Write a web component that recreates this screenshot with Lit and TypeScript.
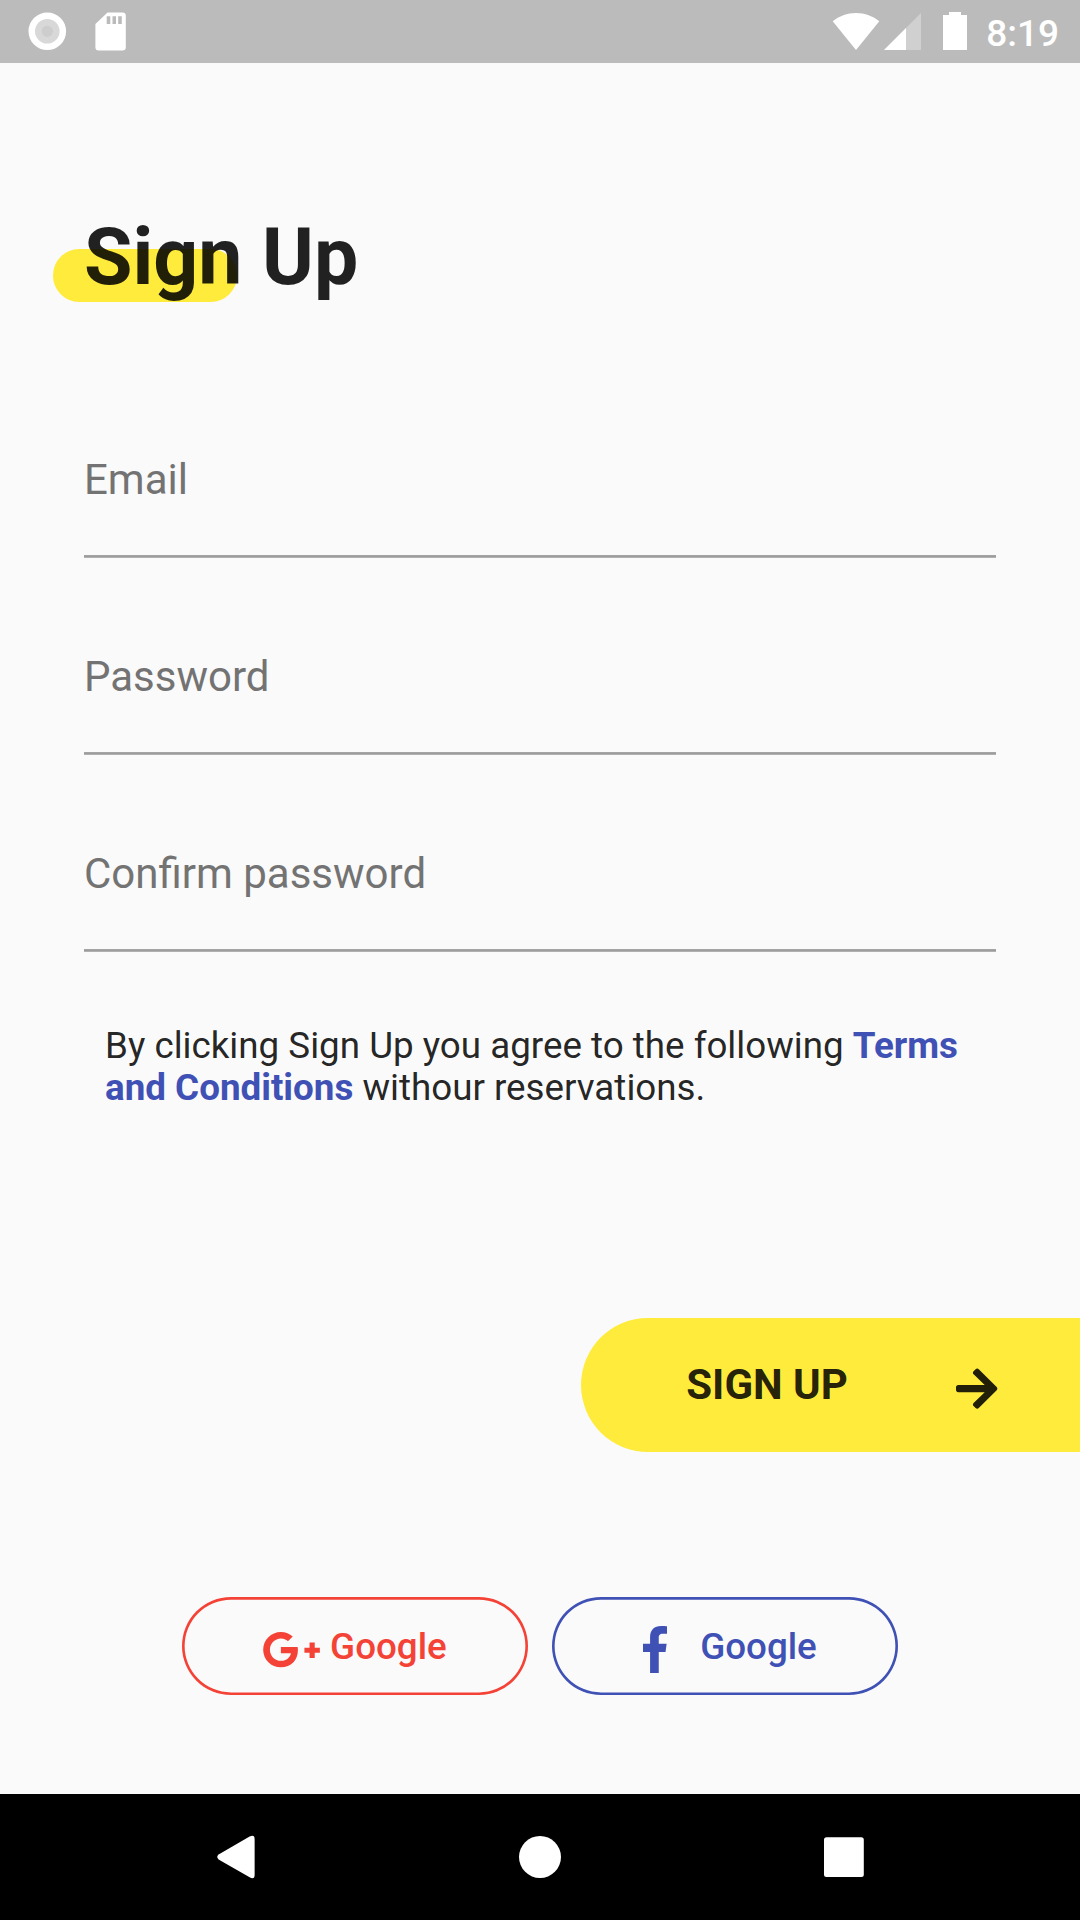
import { LitElement, html, css, svg } from "lit";
import { customElement, property } from "lit/decorators.js";

@customElement("status-bar")
class StatusBar extends LitElement {
  static styles = css`
    :host {
      display: flex;
      justify-content: space-between;
      height: 63px;
      background: #bbbbbb;
      color: #fff;
      font: 500 37px/44px Roboto, sans-serif;
    }
    .left,
    .right {
      display: flex;
      align-items: flex-start;
    }
    svg {
      display: block;
      flex: none;
    }
    .time {
      padding: 12px 21px 0 0;
      white-space: nowrap;
    }
  `;
  render() {
    return html`
      <div class="left">
        <svg width="140" height="63" viewBox="0 0 140 63">
          <circle cx="47.3" cy="31.3" r="18.8" fill="#fff" />
          <circle cx="47.3" cy="31.3" r="12.3" fill="#d8d8d8" />
          <circle cx="47.3" cy="31.3" r="5.6" fill="#cdcdcd" />
          <path
            fill="#fff"
            fill-rule="evenodd"
            d="M107.5 12.5H122.5A3.3 3.3 0 0 1 125.8 15.8V47.2A3.3 3.3 0 0 1 122.5 50.5H98.7A3.3 3.3 0 0 1 95.4 47.2V24ZM106.7 16.3V24H110.3V16.3ZM112.5 16.3V24H116V16.3ZM118.2 16.3V24H121.8V16.3Z"
          />
        </svg>
      </div>
      <div class="right">
        <svg width="156" height="63" viewBox="830 0 156 63">
          <path fill="#fff" d="M856 50 832.7 21.3C839 16.2 847 13 856 13S873 16.2 879.3 21.3Z" />
          <path fill="#d0d0d0" d="M921 13V50H884Z" />
          <path fill="#fff" d="M906 28V50H884Z" />
          <path fill="#fff" d="M949 12H961V15H967V50H943V15H949Z" />
        </svg>
        <span class="time">8:19</span>
      </div>
    `;
  }
}

@customElement("form-field")
class FormField extends LitElement {
  @property() label = "";
  static styles = css`
    :host {
      display: flex;
      flex-direction: column;
      justify-content: space-between;
      height: 103px;
      color: #737373;
      font: 400 42px/49px Roboto, sans-serif;
    }
    .line {
      height: 3px;
      background: linear-gradient(#a4a4a4 1px, #9c9c9c 1px 2px, #b0b0b0 2px);
    }
  `;
  render() {
    return html`<span>${this.label}</span>
      <div class="line"></div>`;
  }
}

@customElement("social-button")
class SocialButton extends LitElement {
  @property() kind = "google";
  static styles = css`
    :host {
      display: block;
      width: 346.5px;
      height: 97.5px;
    }
    .pill {
      box-sizing: border-box;
      display: flex;
      align-items: center;
      height: 100%;
      padding: 2px 0 0 80.5px;
      border-radius: 49px;
      box-shadow: inset 0 0 0 2.625px currentColor;
      font: 500 36.75px/43px Roboto, sans-serif;
    }
    .google {
      color: #f44336;
    }
    .facebook {
      color: #3f51b5;
    }
    .icon {
      box-sizing: border-box;
      display: flex;
      width: 67.9px;
      padding-top: 6px;
    }
    .facebook .icon {
      padding-left: 10.6px;
    }
  `;
  render() {
    const icon =
      this.kind === "google"
        ? svg`<svg width="59.06" height="47.25" viewBox="0 0 640 512"><path fill="currentColor" d="M386.061 228.496c1.834 9.692 3.143 19.384 3.143 31.956C389.204 370.205 315.599 448 204.8 448c-106.084 0-192-85.915-192-192s85.916-192 192-192c51.864 0 95.083 18.859 128.611 50.292l-52.126 50.03c-14.145-13.621-39.028-29.599-76.485-29.599-65.484 0-118.92 54.221-118.92 121.277 0 67.056 53.436 121.277 118.92 121.277 75.961 0 104.513-54.745 108.965-82.773H204.8v-66.009h181.261zm185.406 6.437V179.2h-56.001v55.733h-55.733v56.001h55.733v55.733h56.001v-55.733H627.2v-56.001h-55.733z"/></svg>`
        : svg`<svg width="24.36" height="47.25" viewBox="0 0 264 512"><path fill="currentColor" d="M76.7 512V283H0v-91h76.7v-71.7C76.7 42.4 124.3 0 193.8 0c33.3 0 61.9 2.5 70.2 3.6V85h-48.2c-37.8 0-45.1 18-45.1 44.3V192H256l-11.7 91h-73.6v229"/></svg>`;
    return html`<div class="pill ${this.kind}">
      <span class="icon">${icon}</span><span>Google</span>
    </div>`;
  }
}

@customElement("app-root")
class AppRoot extends LitElement {
  static styles = css`
    :host {
      display: flex;
      flex-direction: column;
      width: 1080px;
      height: 1920px;
      overflow: hidden;
      background: #fafafa;
      color: rgba(0, 0, 0, 0.87);
      font-family: Roboto, sans-serif;
    }
    .page {
      flex: 1;
      display: flex;
      flex-direction: column;
    }
    .title {
      position: relative;
      z-index: 0;
      align-self: flex-start;
      margin: 148px 0 0 84px;
      font: 700 78.75px/92px Roboto, sans-serif;
    }
    .title::before {
      content: "";
      position: absolute;
      z-index: -1;
      left: -31.5px;
      top: 38.3px;
      width: 184px;
      height: 52.5px;
      border-radius: 26.25px;
      background: #ffeb3b;
    }
    .fields {
      display: flex;
      flex-direction: column;
      gap: 94px;
      margin: 152px 84px 0;
    }
    .terms {
      margin: 73px 105px 0;
      font-size: 36.75px;
      line-height: 42px;
    }
    .terms b {
      color: #3f51b5;
      font-weight: 700;
    }
    .submit {
      align-self: flex-end;
      box-sizing: border-box;
      display: flex;
      align-items: center;
      justify-content: space-between;
      width: 498.75px;
      height: 134px;
      margin-top: 208.5px;
      padding: 0 82.2px 0 105px;
      border-radius: 67px 0 0 67px;
      background: #ffeb3b;
      font: 700 42px/49px Roboto, sans-serif;
    }
    .submit svg {
      display: block;
      margin-top: 8px;
    }
    .social {
      display: flex;
      justify-content: center;
      gap: 23.6px;
      margin-top: 145.5px;
    }
    .nav {
      display: flex;
      height: 126px;
      background: #000;
    }
  `;
  render() {
    return html`
      <status-bar></status-bar>
      <main class="page">
        <div class="title">Sign Up</div>
        <div class="fields">
          <form-field label="Email"></form-field>
          <form-field label="Password"></form-field>
          <form-field label="Confirm password"></form-field>
        </div>
        <div class="terms">
          By clicking Sign Up you agree to the following <b>Terms and Conditions</b> withour
          reservations.
        </div>
        <div class="submit">
          <span>SIGN UP</span>
          <svg width="41.34" height="47.25" viewBox="0 0 448 512">
            <path
              fill="#000"
              fill-opacity=".87"
              d="M190.5 66.9l22.2-22.2c9.4-9.4 24.6-9.4 33.9 0L441 239c9.4 9.4 9.4 24.6 0 33.9L246.6 467.3c-9.4 9.4-24.6 9.4-33.9 0l-22.2-22.2c-9.5-9.5-9.3-25 .4-34.3L311.4 296H24c-13.3 0-24-10.7-24-24v-32c0-13.3 10.7-24 24-24h287.4L190.9 101.2c-9.8-9.3-10-24.8-.4-34.3z"
            />
          </svg>
        </div>
        <div class="social">
          <social-button kind="google"></social-button>
          <social-button kind="facebook"></social-button>
        </div>
      </main>
      <nav class="nav">
        <svg width="1080" height="126" viewBox="0 0 1080 126" fill="#fff">
          <path
            d="M218.6 60.6 249.6 42.6Q254.6 40 254.6 45V81Q254.6 86 249.6 83.3L218.6 65.4Q215.8 63 218.6 60.6Z"
          />
          <circle cx="540" cy="63" r="21" />
          <rect x="824" y="43.3" width="39.8" height="39.6" rx="2.5" />
        </svg>
      </nav>
    `;
  }
}
